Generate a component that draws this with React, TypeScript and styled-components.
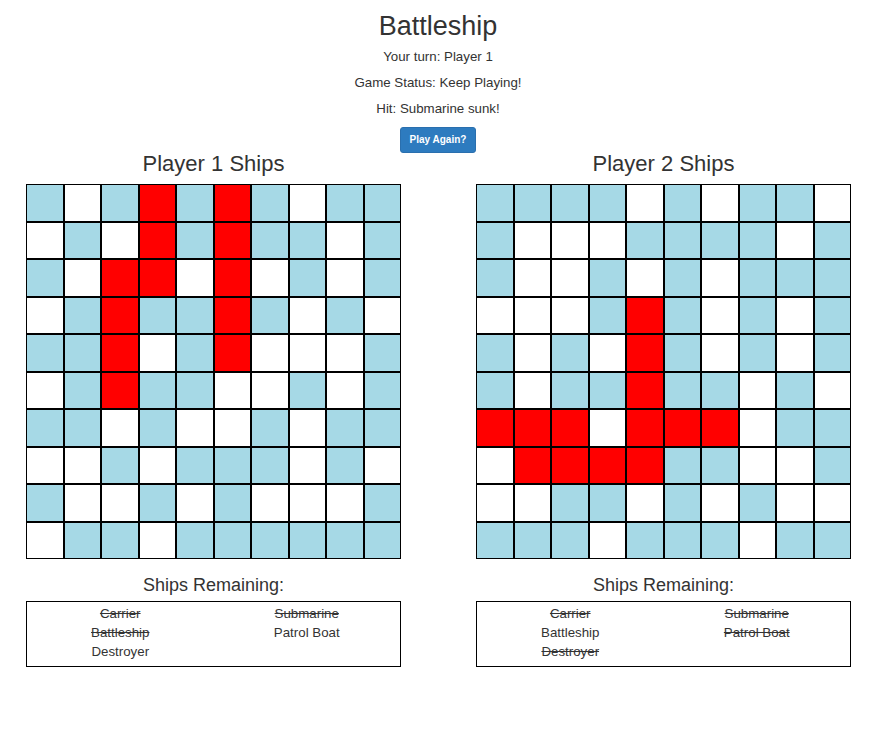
import React from "react";
import styled, { createGlobalStyle } from "styled-components";

const GlobalStyle = createGlobalStyle`
    body {
        margin: 0;
        background: #fff;
        color: #333;
        font-family: "Liberation Sans", Arial, sans-serif;
    }
`;

type Cell = "B" | "W" | "R";

const player1Board = [
    "BWBRBRBWBB",
    "WBWRBRBBWB",
    "BWRRWRWBWB",
    "WBRBBRBWBW",
    "BBRWBRWWWB",
    "WBRBBWWBWB",
    "BBWBWWBWBB",
    "WWBWBBBWBW",
    "BWWBWBWWWB",
    "WBBWBBBBBB",
];

const player2Board = [
    "BBBBWBWBBW",
    "BWWWBBBBWB",
    "BWWBWBWBBB",
    "WWWBRBWBWB",
    "BWBWRBWBWB",
    "BWBBRBBWBW",
    "RRRWRRRWBB",
    "WRRRRBBWWB",
    "WWBBWBWBWW",
    "BBBWBBBWBB",
];

interface IShip {
    name: string;
    sunk: boolean;
}

const player1Ships: IShip[] = [
    { name: "Carrier", sunk: true },
    { name: "Battleship", sunk: true },
    { name: "Destroyer", sunk: false },
    { name: "Submarine", sunk: true },
    { name: "Patrol Boat", sunk: false },
];

const player2Ships: IShip[] = [
    { name: "Carrier", sunk: true },
    { name: "Battleship", sunk: false },
    { name: "Destroyer", sunk: true },
    { name: "Submarine", sunk: true },
    { name: "Patrol Boat", sunk: true },
];

const cellColors: Record<Cell, string> = {
    B: "#a6d9e6",
    W: "#ffffff",
    R: "#ff0000",
};

const Page = styled.div`
    text-align: center;
`;

/* Header */
const Header = styled.div`
    padding-left: 7px;
`;

const Title = styled.h1`
    font-size: 27px;
    font-weight: 500;
    line-height: 30px;
    margin: 11px 0 6px;
`;

const StatusLine = styled.p`
    font-size: 13.3px;
    line-height: 20px;
    margin: 0 0 6px;
`;

const PlayButton = styled.button`
    margin-top: 2px;
    font-family: inherit;
    font-size: 10px;
    font-weight: bold;
    line-height: 16px;
    padding: 4px 9px;
    color: #fff;
    background-color: #2d7bbf;
    border: 1px solid #2a6fae;
    border-radius: 3px;
    cursor: pointer;
    vertical-align: top;
`;

/* Boards */
const Boards = styled.div`
    display: flex;
    flex-direction: row;
    gap: 75px;
    padding-left: 26px;
    text-align: center;
`;

const PlayerColumn = styled.div`
    width: 375px;
    display: flex;
    flex-direction: column;
`;

const PlayerTitle = styled.h3`
    font-size: 22px;
    font-weight: 500;
    line-height: 22px;
    margin: 0 0 9px;
`;

const Grid = styled.div`
    display: grid;
    grid-template-columns: repeat(10, 37.5px);
    grid-template-rows: repeat(10, 37.5px);
    width: 375px;
`;

const GridCell = styled.div<{ $kind: Cell }>`
    box-sizing: border-box;
    border: 1px solid #000;
    background-color: ${({ $kind }) => cellColors[$kind]};
`;

const RemainingTitle = styled.h4`
    font-size: 18px;
    font-weight: 500;
    line-height: 22px;
    margin: 15px 0 5px;
`;

const ShipBox = styled.ul`
    list-style: none;
    margin: 0;
    padding: 2px 0 5px;
    border: 1px solid #000;
    column-count: 2;
    column-gap: 0;
`;

const ShipItem = styled.li<{ $sunk: boolean }>`
    font-size: 13.3px;
    line-height: 19px;
    text-align: center;
    text-decoration: ${({ $sunk }) => ($sunk ? "line-through" : "none")};
`;

interface PlayerBoardProps {
    title: string;
    board: string[];
    ships: IShip[];
}

const PlayerBoard: React.FC<PlayerBoardProps> = ({ title, board, ships }) => (
    <PlayerColumn>
        <PlayerTitle>{title}</PlayerTitle>
        <Grid>
            {board.map((row, r) =>
                row.split("").map((c, i) => <GridCell key={`${r}-${i}`} $kind={c as Cell} />)
            )}
        </Grid>
        <RemainingTitle>Ships Remaining:</RemainingTitle>
        <ShipBox>
            {ships.map((s) => (
                <ShipItem key={s.name} $sunk={s.sunk}>{s.name}</ShipItem>
            ))}
        </ShipBox>
    </PlayerColumn>
);

const App: React.FC = () => (
    <Page>
        <GlobalStyle />
        <Header>
            <Title>Battleship</Title>
            <StatusLine>Your turn: Player 1</StatusLine>
            <StatusLine>Game Status: Keep Playing!</StatusLine>
            <StatusLine>Hit: Submarine sunk!</StatusLine>
            <PlayButton>Play Again?</PlayButton>
        </Header>
        <Boards>
            <PlayerBoard title="Player 1 Ships" board={player1Board} ships={player1Ships} />
            <PlayerBoard title="Player 2 Ships" board={player2Board} ships={player2Ships} />
        </Boards>
    </Page>
);

export default App;
